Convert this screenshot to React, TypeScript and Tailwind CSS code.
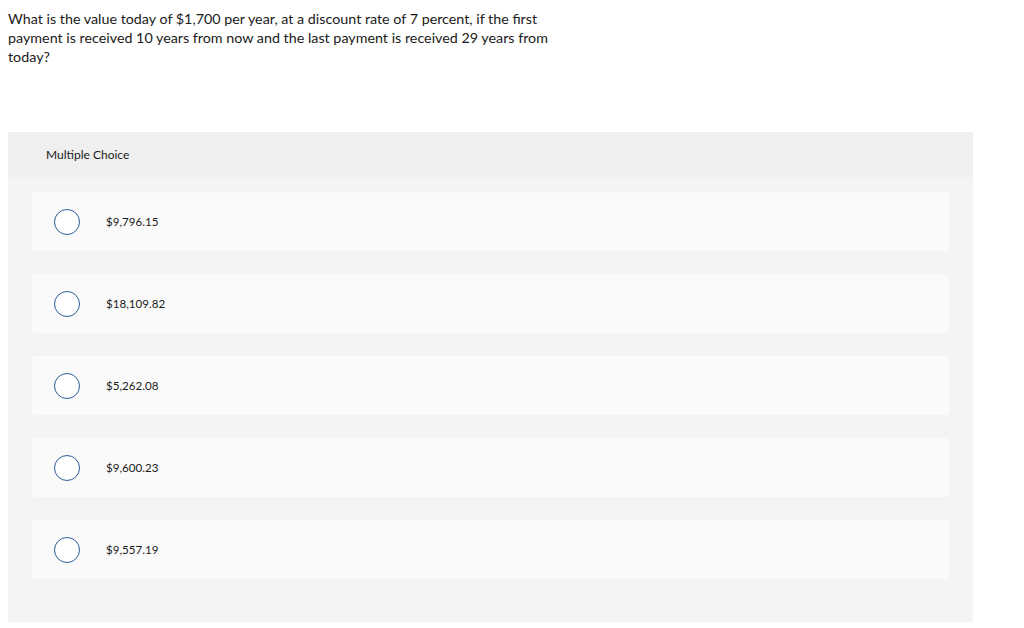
import React from 'react';

const OPTIONS = ['$9,796.15', '$18,109.82', '$5,262.08', '$9,600.23', '$9,557.19'];

const App: React.FC = () => {
  return (
    <div className="w-[1024px] h-[628px] bg-white font-['Lato','Open_Sans',sans-serif] text-[#1a1a1a] pt-[9px]">
      <p className="pl-[8px] text-[14.3px] leading-[19px] whitespace-nowrap">
        What is the value today of $1,700 per year, at a discount rate of 7 percent, if the first
        <br />
        payment is received 10 years from now and the last payment is received 29 years from
        <br />
        today?
      </p>

      <div className="mt-[66px] ml-[8px] w-[965px] bg-[#f4f4f4]">
        <div className="h-[45px] bg-[#efefef] flex items-center pl-[38px] text-[12px]">Multiple Choice</div>
        <div className="px-[24px] pt-[15px] pb-[43px] flex flex-col gap-[23px]">
          {OPTIONS.map((opt) => (
            <div key={opt} className="h-[59px] bg-[#fafafa] rounded-[2px] flex items-center pl-[22px]">
              <span className="w-[26px] h-[26px] rounded-full border border-[#2d5c97] bg-white shrink-0" />
              <span className="ml-[26px] text-[11.6px]">{opt}</span>
            </div>
          ))}
        </div>
      </div>
    </div>
  );
};

export default App;
